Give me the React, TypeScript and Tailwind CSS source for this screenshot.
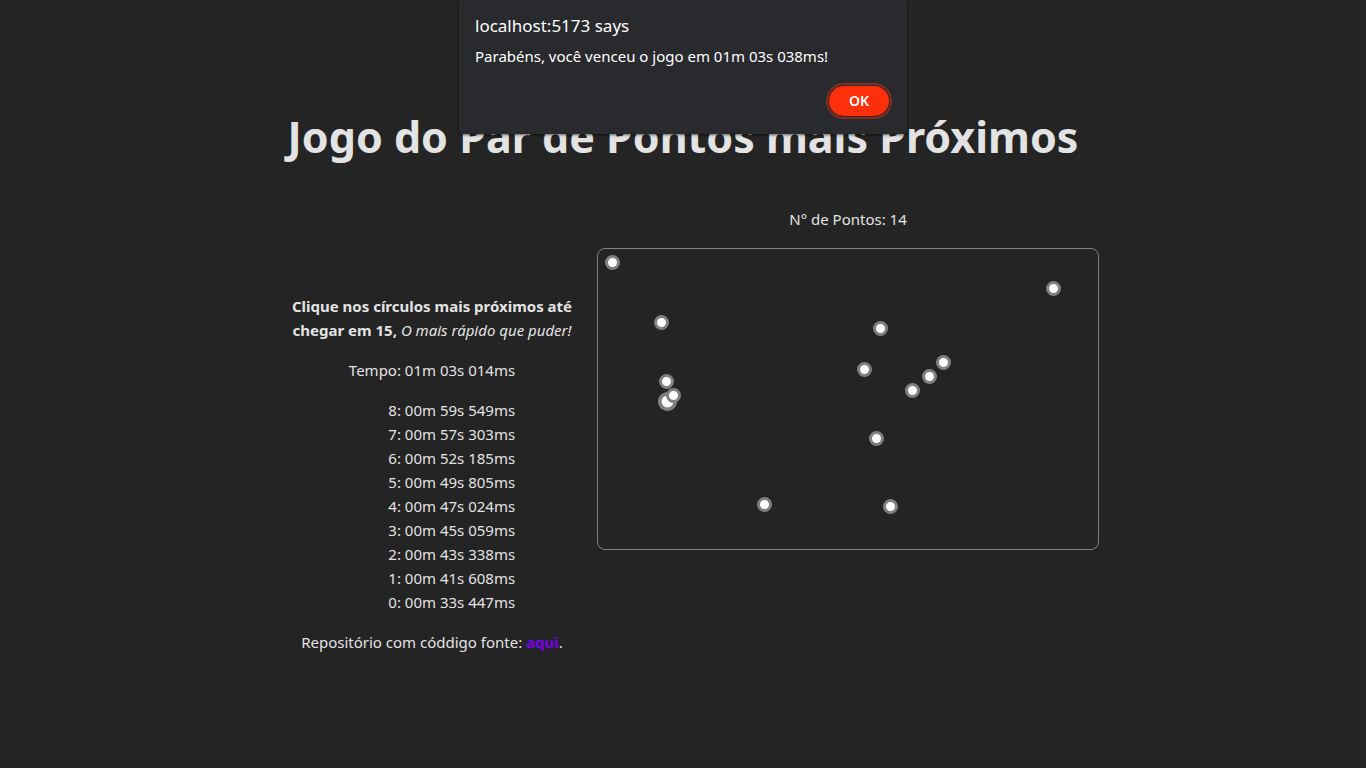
type Point = { x: number; y: number; selected?: boolean };

const points: Point[] = [
  { x: 14.5, y: 13.5 },
  { x: 455.5, y: 39.5 },
  { x: 63.5, y: 73.5 },
  { x: 282.5, y: 79.5 },
  { x: 266.5, y: 120.5 },
  { x: 345.5, y: 113.5 },
  { x: 331.5, y: 127.5 },
  { x: 314.5, y: 141.5 },
  { x: 68.5, y: 132.5 },
  { x: 69.5, y: 152.5, selected: true },
  { x: 75.5, y: 146.5 },
  { x: 278.5, y: 189.5 },
  { x: 166.5, y: 255.5 },
  { x: 292.5, y: 257.5 },
];

const laps = [
  "8: 00m 59s 549ms",
  "7: 00m 57s 303ms",
  "6: 00m 52s 185ms",
  "5: 00m 49s 805ms",
  "4: 00m 47s 024ms",
  "3: 00m 45s 059ms",
  "2: 00m 43s 338ms",
  "1: 00m 41s 608ms",
  "0: 00m 33s 447ms",
];

function WinDialog() {
  return (
    <div
      role="alertdialog"
      aria-labelledby="dialog-title"
      aria-describedby="dialog-text"
      className="absolute top-0 left-1/2 flex w-[448px] -translate-x-1/2 flex-col rounded-b-sm bg-[#292a2d] px-4 pt-3 pb-[18px] text-white shadow-[0_1px_3px_0_rgba(0,0,0,0.6)]"
    >
      <h2 id="dialog-title" className="text-[17px] leading-7">
        localhost:5173 says
      </h2>
      <p id="dialog-text" className="mt-1 text-[15px] leading-6">
        Parabéns, você venceu o jogo em 01m 03s 038ms!
      </p>
      <button
        type="button"
        className="mt-[18px] mr-0.5 h-[30px] w-[60px] self-end rounded-full bg-[#ff2f0a] text-sm leading-5 font-semibold outline-2 outline-offset-1 outline-[#872c20]"
      >
        OK
      </button>
    </div>
  );
}

function Board() {
  return (
    <section className="flex flex-col items-center gap-[17px]">
      <p>N° de Pontos: {points.length}</p>
      <div className="rounded-lg border border-[#808080]">
        <svg width="500" height="300" viewBox="0 0 500 300" role="img" aria-label="Pontos" className="block">
          {points.map((p) => (
            <circle
              key={`${p.x}-${p.y}`}
              cx={p.x}
              cy={p.y}
              r={p.selected ? 7.75 : 6}
              fill="#fff"
              stroke="#808080"
              strokeWidth={p.selected ? 3.75 : 3}
            />
          ))}
        </svg>
      </div>
    </section>
  );
}

export default function App() {
  return (
    <div className="min-h-screen bg-[#242424] font-['Noto_Sans',sans-serif] text-[15px] leading-6 text-[#e3e3e3]">
      <main className="flex flex-col items-center pt-[107px]">
        <h1 className="text-center text-[43px] leading-[60px] font-bold">Jogo do Par de Pontos mais Próximos</h1>
        <div className="mt-10 flex justify-center">
          <section className="flex w-[330px] flex-col items-center gap-4 pt-[87px]">
            <p className="text-center">
              <strong>
                Clique nos círculos mais próximos até
                <br />
                chegar em 15,
              </strong>{" "}
              <em>O mais rápido que puder!</em>
            </p>
            <div className="flex flex-col gap-4 text-right">
              <p>Tempo: 01m 03s 014ms</p>
              <ol>
                {laps.map((lap) => (
                  <li key={lap}>{lap}</li>
                ))}
              </ol>
            </div>
            <p>
              Repositório com códdigo fonte:{" "}
              <a href="#repositorio" className="font-bold text-[#7600ee]">
                aqui
              </a>
              .
            </p>
          </section>
          <Board />
        </div>
      </main>
      <WinDialog />
    </div>
  );
}
